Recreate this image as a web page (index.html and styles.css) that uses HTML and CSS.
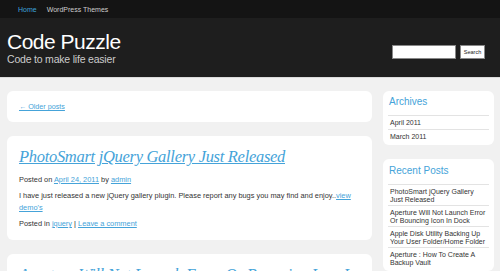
FILE: index.html
```html
<!DOCTYPE html>
<html lang="en">
<head>
  <meta charset="utf-8">
  <title>Code Puzzle</title>
  <link rel="stylesheet" href="styles.css">
</head>
<body>

<div class="topnav">
  <a href="#" class="current">Home</a>
  <a href="#">WordPress Themes</a>
</div>

<div class="header">
  <div class="branding">
    <h1>Code Puzzle</h1>
    <p class="tagline">Code to make life easier</p>
  </div>
  <form class="search">
    <input type="text">
    <button type="button">Search</button>
  </form>
</div>

<div class="main">
  <div class="content">
    <div class="card nav-posts">
      <a href="#">&larr; Older posts</a>
    </div>

    <div class="card post">
      <h2><a href="#">PhotoSmart jQuery Gallery Just Released</a></h2>
      <p class="meta">Posted on <a href="#">April 24, 2011</a> by <a href="#">admin</a></p>
      <p class="entry">I have just released a new jQuery gallery plugin. Please report any bugs you may find and enjoy..<a href="#">view demo's</a></p>
      <p class="meta">Posted in <a href="#">jquery</a> | <a href="#">Leave a comment</a></p>
    </div>

    <div class="card post">
      <h2><a href="#">Aperture Will Not Launch Error Or Bouncing Icon In Dock</a></h2>
    </div>
  </div>

  <div class="sidebar">
    <div class="card widget">
      <h3>Archives</h3>
      <ul>
        <li>April 2011</li>
        <li>March 2011</li>
      </ul>
    </div>
    <div class="card widget">
      <h3>Recent Posts</h3>
      <ul>
        <li>PhotoSmart jQuery Gallery Just Released</li>
        <li>Aperture Will Not Launch Error Or Bouncing Icon In Dock</li>
        <li>Apple Disk Utility Backing Up Your User Folder/Home Folder</li>
        <li>Aperture : How To Create A Backup Vault</li>
      </ul>
    </div>
  </div>
</div>

</body>
</html>
```

FILE: styles.css
```css
body {
  font-family: 'Liberation Sans', Arial, sans-serif;
  background-color: #f1f1f1;
  color: #333;
  margin: 0;
  height: 271px;
  overflow: hidden;
}
a {
  color: #45a3d9;
}
.topnav {
  background-color: #141414;
  height: 18px;
  display: flex;
  align-items: center;
  padding-left: 18px;
  gap: 10px;
  font-size: 7px;
}
.topnav a {
  color: #ccc;
  text-decoration: none;
}
.topnav a.current {
  color: #3ea2dc;
}
.header {
  background-color: #1e1e1e;
  height: 60px;
  box-sizing: border-box;
  padding: 13px 15px 0 7px;
  display: flex;
  justify-content: space-between;
  border-bottom: 1px solid #dcdcdc;
}
.header h1 {
  margin: 0;
  color: #fff;
  font-weight: normal;
  font-size: 21px;
  line-height: 22px;
  letter-spacing: -0.5px;
}
.tagline {
  margin: 0;
  color: #ccc;
  font-size: 10.5px;
  line-height: 12px;
  letter-spacing: -0.2px;
}
.search {
  display: flex;
  align-items: center;
  gap: 4px;
  margin-top: 14px;
  height: 14px;
}
.search input {
  width: 64px;
  height: 14px;
  box-sizing: border-box;
  border: 1px solid #888;
  padding: 0;
  margin: 0;
}
.search button {
  width: 25px;
  height: 14px;
  box-sizing: border-box;
  border: 1px solid #888;
  background-color: #fff;
  padding: 0;
  font-family: 'Liberation Sans', Arial, sans-serif;
  font-size: 5.5px;
  color: #222;
}
.main {
  display: flex;
  gap: 11px;
  padding: 13px 6px 0 7px;
}
.content {
  width: 365px;
  display: flex;
  flex-direction: column;
  gap: 14px;
}
.sidebar {
  width: 111px;
  display: flex;
  flex-direction: column;
  gap: 14px;
}
.card {
  background-color: #fff;
  border-radius: 6px;
}
.nav-posts {
  height: 31px;
  box-sizing: border-box;
  padding: 0 12px;
  display: flex;
  align-items: center;
  font-size: 7.2px;
}
.post {
  padding: 10px 12px 10px;
}
.post h2 {
  margin: 0;
  font-family: 'Liberation Serif', Georgia, serif;
  font-style: italic;
  font-weight: normal;
  font-size: 16.5px;
  line-height: 22px;
  letter-spacing: -0.3px;
}
.meta, .entry {
  margin: 4px 0 0;
  font-size: 7.4px;
  line-height: 12px;
}
.post h2 + .meta {
  margin-top: 6px;
}
.widget {
  padding: 4px 5px 3px;
}
.widget h3 {
  margin: 0 0 6px 1px;
  color: #45a3d9;
  font-weight: normal;
  font-size: 10px;
  line-height: 14px;
}
.widget + .widget h3 {
  margin-top: 1px;
}
.widget ul {
  list-style: none;
  margin: 0;
  padding: 0;
}
.widget li {
  border-top: 1px solid #e3e3e3;
  padding: 3px 2px 2px;
  font-size: 7px;
  line-height: 7.5px;
}
```
